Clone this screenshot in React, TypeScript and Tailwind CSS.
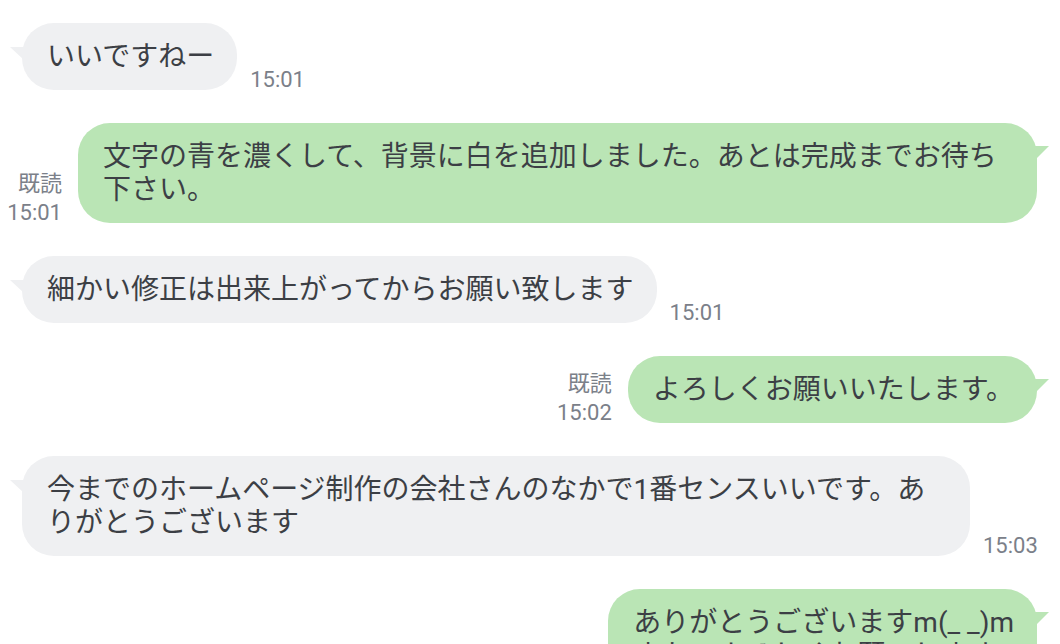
const font = "font-['Roboto','Noto_Sans_CJK_JP',sans-serif]";

function Received({ text, time, wide }: { text: React.ReactNode; time: string; wide?: string }) {
  return (
    <div className="flex items-end pl-[22px]">
      <div
        className={`relative bg-[#eff0f2] rounded-[32px] pl-[25px] pr-[23px] py-[17px] text-[28px] leading-[33px] text-[#3c3f45] whitespace-nowrap ${wide ?? ""}`}
      >
        <svg className="absolute left-[-12px] top-[24px]" width="14" height="13" viewBox="0 0 14 13">
          <path d="M0 0 L14 0 L14 13 Z" fill="#eff0f2" />
        </svg>
        {text}
      </div>
      <div className="ml-[13px] mb-[-4px] text-[22px] leading-[28px] text-[#7b8089]">{time}</div>
    </div>
  );
}

function Sent({ text, time, wide }: { text: React.ReactNode; time?: string; wide?: string }) {
  return (
    <div className="flex items-end justify-end pr-[23px]">
      {time && (
        <div className="mr-[16px] mb-[-4px] text-right text-[22px] leading-[29px] text-[#7b8089]">
          <div>既読</div>
          <div>{time}</div>
        </div>
      )}
      <div
        className={`relative bg-[#bae5b5] rounded-[32px] pl-[25px] pr-[23px] py-[17px] text-[28px] leading-[33px] text-[#3c3f45] whitespace-nowrap ${wide ?? ""}`}
      >
        <svg className="absolute right-[-12px] top-[23px]" width="14" height="14" viewBox="0 0 14 14">
          <path d="M14 0 L0 0 L0 14 Z" fill="#bae5b5" />
        </svg>
        {text}
      </div>
    </div>
  );
}

export default function App() {
  return (
    <div className={`w-[1060px] h-[644px] overflow-hidden bg-white flex flex-col gap-[33px] pt-[23px] ${font}`}>
      <Received text="いいですねー" time="15:01" />
      <Sent
        time="15:01"
        wide="w-[959px]"
        text={
          <>
            文字の青を濃くして、背景に白を追加しました。あとは完成までお待ち
            <br />
            下さい。
          </>
        }
      />
      <Received text="細かい修正は出来上がってからお願い致します" time="15:01" />
      <Sent time="15:02" text="よろしくお願いいたします。" />
      <Received
        time="15:03"
        wide="w-[948px]"
        text={
          <>
            今までのホームページ制作の会社さんのなかで1番センスいいです。あ
            <br />
            りがとうございます
          </>
        }
      />
      <Sent
        text={
          <>
            ありがとうございますm(_ _)m
            <br />
            また、よろしくお願いします
          </>
        }
      />
    </div>
  );
}
